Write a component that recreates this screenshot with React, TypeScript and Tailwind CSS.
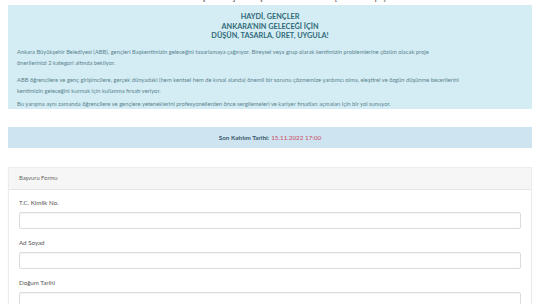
import React from 'react';

/* Başvuru sayfası: bilgi kutusu, son tarih şeridi ve form kartı. */

const font = { fontFamily: 'Lato, "Open Sans", sans-serif' };

function Field({ label }: { label: string }) {
  return (
    <div className="mb-[9px]">
      <div className="text-[6.2px] leading-[10px] text-[#555] mb-[4px]">{label}</div>
      <div className="h-[17px] rounded-[2px] border border-[#dcdcdc] bg-white shadow-[inset_0_1px_1px_rgba(0,0,0,0.05)]" />
    </div>
  );
}

export default function App() {
  return (
    <div className="w-[540px] h-[304px] overflow-hidden bg-white" style={font}>
      {/* üstte kesilmiş başlık satırı: yalnızca harf kuyrukları görünüyor */}
      <div className="h-[5px] overflow-hidden">
        <div className="-mt-[9px] text-center text-[10px] leading-[10px] text-[#666] pl-[50px] whitespace-nowrap">
          Gençlik Proje Yarışması — Kentsel Çözüm Yapıyoruz
        </div>
      </div>

      <div className="mx-[8px] bg-[#d4ecf3] px-[9px] pt-[7px] pb-0">
        <div className="text-center text-[7.3px] leading-[9.6px] font-bold text-[#2f6a78]">
          <div>HAYDİ, GENÇLER</div>
          <div>ANKARA'NIN GELECEĞİ İÇİN</div>
          <div>DÜŞÜN, TASARLA, ÜRET, UYGULA!</div>
        </div>
        <div className="text-[5.8px] leading-[11px] text-[#5b8591]">
          <p className="mt-[5px]">
            Ankara Büyükşehir Belediyesi (ABB), gençleri Başkentimizin geleceğini tasarlamaya çağırıyor. Bireysel veya grup olarak kentimizin problemlerine çözüm olacak proje
            <br />
            önerilerinizi 2 kategori altında bekliyor.
          </p>
          <p className="mt-[6px]">
            ABB öğrencilere ve genç girişimcilere, gerçek dünyadaki (hem kentsel hem de kırsal alanda) önemli bir sorunu çözmemize yardımcı olma, eleştirel ve özgün düşünme becerilerini
            <br />
            kentimizin geleceğini kurmak için kullanma fırsatı veriyor.
          </p>
          <p className="mt-[2px]">
            Bu yarışma aynı zamanda öğrencilere ve gençlere yeteneklerini profesyonellerden önce sergilemeleri ve kariyer fırsatları açmaları için bir yol sunuyor.
          </p>
        </div>
      </div>

      <div className="mx-[8px] mt-[18px] h-[21px] bg-[#cfe4f1] flex items-center justify-center text-[6.3px]">
        <span className="font-bold text-[#38596a]">Son Katılım Tarihi:</span>
        <span className="ml-[2px] text-[#c8495e]">15.11.2022 17:00</span>
      </div>

      <div className="mx-[8px] mt-[19px] border border-[#ececec] shadow-[0_1px_2px_rgba(0,0,0,0.04)]">
        <div className="h-[22px] bg-[#f6f6f6] border-b border-[#e6e6e6] flex items-center px-[10px] text-[5.8px] text-[#666]">
          Başvuru Formu
        </div>
        <div className="px-[10px] pt-[8px] bg-white">
          <Field label="T.C. Kimlik No." />
          <Field label="Ad Soyad" />
          <Field label="Doğum Tarihi" />
        </div>
      </div>
    </div>
  );
}
